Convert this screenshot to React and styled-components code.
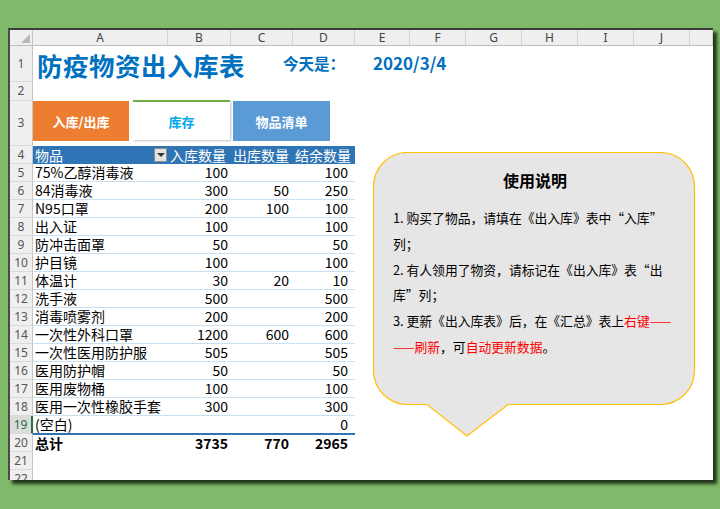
import React from 'react'
import styled, { createGlobalStyle } from 'styled-components'

const GlobalStyle = createGlobalStyle`
  html, body {
    margin: 0;
    padding: 0;
    background: #7fb96a;
  }
  body {
    font-family: "Noto Sans CJK SC", "Noto Sans", sans-serif;
  }
`

const Page = styled.div`
  width: 720px;
  height: 509px;
  padding: 28px 0 0 8px;
  box-sizing: border-box;
  overflow: hidden;
`

const Sheet = styled.div`
  position: relative;
  width: 705px;
  height: 452px;
  box-sizing: border-box;
  background: #fff;
  border-top: 2px solid #3d3d3d;
  border-left: 2px solid #4a4a4a;
  box-shadow: 4px 4px 3px rgba(20, 30, 15, 0.85);
  display: flex;
  flex-direction: column;
  overflow: hidden;
`

const Row = styled.div`
  display: flex;
  flex-shrink: 0;
  height: ${p => p.$h}px;
`

const Corner = styled.div`
  position: relative;
  width: 23px;
  flex-shrink: 0;
  background: #efefef;
  border-right: 1px solid #c6c6c6;
  border-bottom: 1px solid #bdbdbd;
  box-sizing: border-box;
  &::after {
    content: '';
    position: absolute;
    right: 2px;
    bottom: 2px;
    border-left: 9px solid transparent;
    border-bottom: 9px solid #b8b8b8;
  }
`

const ColHead = styled.div`
  width: ${p => p.$w}px;
  flex: ${p => (p.$w ? '0 0 auto' : '1')};
  box-sizing: border-box;
  background: #efefef;
  border-right: 1px solid #d4d4d4;
  border-bottom: 1px solid #bdbdbd;
  font-family: "Noto Sans", "Liberation Sans", sans-serif;
  font-size: 12px;
  line-height: 15px;
  color: #444;
  display: flex;
  align-items: center;
  justify-content: center;
`

const RowHead = styled.div`
  width: 23px;
  flex-shrink: 0;
  box-sizing: border-box;
  background: ${p => (p.$sel ? '#dcdcdc' : '#efefef')};
  border-bottom: 1px solid #d9d9d9;
  border-right: ${p => (p.$sel ? '2px solid #217346' : '1px solid #c6c6c6')};
  font-family: "Noto Sans", "Liberation Sans", sans-serif;
  font-size: 12px;
  line-height: 16px;
  color: ${p => (p.$sel ? '#217346' : '#555')};
  display: flex;
  align-items: center;
  justify-content: center;
`

const TitleLine = styled.div`
  flex: 1;
  display: flex;
  align-items: center;
  padding-left: 4px;
  color: #0070c0;
  font-weight: 700;
`

const Title = styled.div`
  font-size: 25.5px;
  letter-spacing: 0.5px;
  width: 246px;
`

const Today = styled.div`
  font-size: 15.5px;
  width: 90px;
  margin-top: -2px;
`

const DateText = styled.div`
  font-size: 17px;
  margin-top: -4px;
`

const Tabs = styled.div`
  flex: 1;
  display: flex;
  align-items: flex-start;
  gap: 3px;
`

const Tab = styled.div`
  width: ${p => p.$w}px;
  height: 40px;
  box-sizing: border-box;
  margin-top: ${p => (p.$active ? '-1px' : '0')};
  margin-left: ${p => p.$ml || 0}px;
  background: ${p => p.$bg};
  color: ${p => p.$color};
  border-top: ${p => (p.$active ? '2px solid #70ad47' : 'none')};
  box-shadow: ${p => (p.$active ? '1px 1px 2px rgba(0,0,0,0.25)' : 'none')};
  font-size: 13px;
  font-weight: 700;
  display: flex;
  align-items: center;
  justify-content: center;
`

const TableRow = styled.div`
  display: flex;
  box-sizing: border-box;
  height: 100%;
  border-top: ${p => p.$top || 'none'};
  border-bottom: ${p => p.$border || 'none'};
  background: ${p => p.$bg || 'transparent'};
  color: ${p => p.$color || '#000'};
  font-weight: ${p => (p.$bold ? 700 : 400)};
  font-size: 14px;
  line-height: 17px;
`

const Cell = styled.div`
  width: ${p => p.$w}px;
  flex-shrink: 0;
  box-sizing: border-box;
  display: flex;
  align-items: center;
  justify-content: ${p => (p.$right ? 'flex-end' : 'space-between')};
  padding: ${p => (p.$right ? `0 ${p.$pr}px 0 0` : '0 1px 0 2px')};
  white-space: nowrap;
`

const FilterButton = styled.div`
  width: 13px;
  height: 14px;
  box-sizing: border-box;
  background: #e4e4e4;
  border: 1px solid #8c8c8c;
  display: flex;
  align-items: center;
  justify-content: center;
  &::after {
    content: '';
    border-left: 4px solid transparent;
    border-right: 4px solid transparent;
    border-top: 4px solid #333;
  }
`

const Callout = styled.div`
  position: absolute;
  left: 363px;
  top: 122px;
  width: 324px;
  height: 288px;
`

const CalloutShape = styled.svg`
  position: absolute;
  inset: 0;
`

const CalloutBody = styled.div`
  position: relative;
  padding: 16px 10px 0 20px;
  color: #000;
`

const CalloutTitle = styled.div`
  height: 24px;
  line-height: 24px;
  text-align: center;
  font-size: 16px;
  font-weight: 700;
  margin-bottom: 13px;
  padding-right: 10px;
`

const NoteLine = styled.div`
  height: 25.8px;
  line-height: 25.8px;
  font-size: 12.8px;
  white-space: nowrap;
`

const Red = styled.span`
  color: #ff0000;
`

const columns = [
  ['A', 135], ['B', 63], ['C', 62], ['D', 62], ['E', 55],
  ['F', 56], ['G', 56], ['H', 56], ['I', 56], ['J', 56],
]

const items = [
  ['75%乙醇消毒液', '100', '', '100'],
  ['84消毒液', '300', '50', '250'],
  ['N95口罩', '200', '100', '100'],
  ['出入证', '100', '', '100'],
  ['防冲击面罩', '50', '', '50'],
  ['护目镜', '100', '', '100'],
  ['体温计', '30', '20', '10'],
  ['洗手液', '500', '', '500'],
  ['消毒喷雾剂', '200', '', '200'],
  ['一次性外科口罩', '1200', '600', '600'],
  ['一次性医用防护服', '505', '', '505'],
  ['医用防护帽', '50', '', '50'],
  ['医用废物桶', '100', '', '100'],
  ['医用一次性橡胶手套', '300', '', '300'],
  ['(空白)', '', '', '0'],
]

const DataRow = ({ row, cells, border, top, bold, sel }) => (
  <Row $h={18}>
    <RowHead $sel={sel}>{row}</RowHead>
    <TableRow $border={border} $top={top} $bold={bold}>
      <Cell $w={135}>{cells[0]}</Cell>
      <Cell $w={63} $right $pr={3}>{cells[1]}</Cell>
      <Cell $w={62} $right $pr={4}>{cells[2]}</Cell>
      <Cell $w={62} $right $pr={7}>{cells[3]}</Cell>
    </TableRow>
  </Row>
)

const App = () => {
  return (
    <Page>
      <GlobalStyle />
      <Sheet>
        <Row $h={16}>
          <Corner />
          {columns.map(([name, w]) => (
            <ColHead key={name} $w={w}>{name}</ColHead>
          ))}
          <ColHead />
        </Row>

        <Row $h={36}>
          <RowHead>1</RowHead>
          <TitleLine>
            <Title>防疫物资出入库表</Title>
            <Today>今天是：</Today>
            <DateText>2020/3/4</DateText>
          </TitleLine>
        </Row>

        <Row $h={19}>
          <RowHead>2</RowHead>
        </Row>

        <Row $h={45}>
          <RowHead>3</RowHead>
          <Tabs>
            <Tab $w={96} $bg="#ed7d31" $color="#fff">入库/出库</Tab>
            <Tab $w={97} $ml={1} $active $bg="#fff" $color="#00a6e8">库存</Tab>
            <Tab $w={97} $bg="#5b9bd5" $color="#fff">物品清单</Tab>
          </Tabs>
        </Row>

        <Row $h={18}>
          <RowHead>4</RowHead>
          <TableRow $bg="#2f75b5" $color="#fff">
            <Cell $w={135}>物品<FilterButton /></Cell>
            <Cell $w={63}>入库数量</Cell>
            <Cell $w={62}>出库数量</Cell>
            <Cell $w={62}>结余数量</Cell>
          </TableRow>
        </Row>

        {items.map((cells, i) => (
          <DataRow
            key={i}
            row={i + 5}
            cells={cells}
            sel={i === 14}
            border={i === 14 ? '1px solid #2f75b5' : '1px solid #c9dff2'}
          />
        ))}

        <DataRow row={20} cells={['总计', '3735', '770', '2965']} bold top="1px solid #2f75b5" />

        <Row $h={18}>
          <RowHead>21</RowHead>
        </Row>
        <Row $h={18}>
          <RowHead>22</RowHead>
        </Row>

        <Callout>
          <CalloutShape width="324" height="288" viewBox="0 0 324 288">
            <path
              d="M 34.5 0.5 H 287.5 A 34 34 0 0 1 321.5 34.5 V 218.5 A 34 34 0 0 1 287.5 252.5 H 135 L 94 284 L 54 252.5 H 34.5 A 34 34 0 0 1 0.5 218.5 V 34.5 A 34 34 0 0 1 34.5 0.5 Z"
              fill="#e7e6e6"
              stroke="#ffc000"
              strokeWidth="1.2"
            />
          </CalloutShape>
          <CalloutBody>
            <CalloutTitle>使用说明</CalloutTitle>
            <NoteLine>1. 购买了物品，请填在《出入库》表中“入库”</NoteLine>
            <NoteLine>列；</NoteLine>
            <NoteLine>2. 有人领用了物资，请标记在《出入库》表“出</NoteLine>
            <NoteLine>库”列；</NoteLine>
            <NoteLine>3. 更新《出入库表》后，在《汇总》表上<Red>右键——</Red></NoteLine>
            <NoteLine><Red>——刷新</Red>，可<Red>自动更新数据</Red>。</NoteLine>
          </CalloutBody>
        </Callout>
      </Sheet>
    </Page>
  )
}

export default App
